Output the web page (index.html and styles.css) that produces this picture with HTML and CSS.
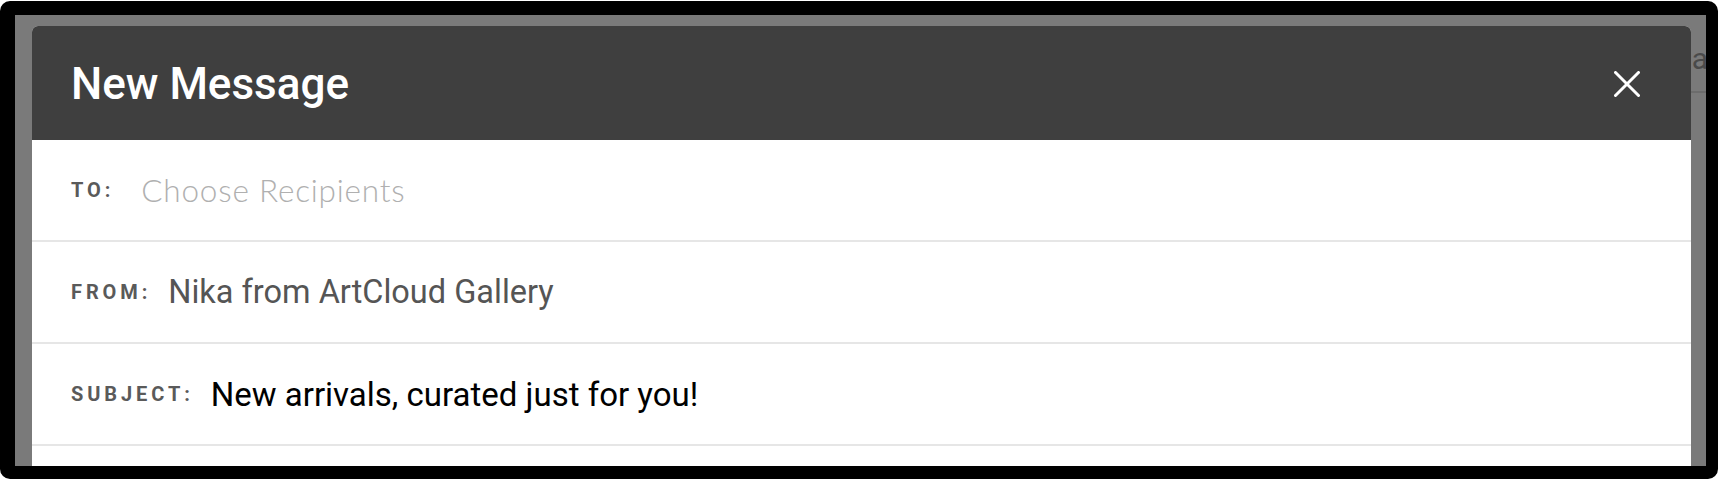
FILE: index.html
```html
<!DOCTYPE html>
<html>
<head>
  <meta charset="utf-8">
  <meta name="viewport" content="width=device-width, initial-scale=1">
  <title>New Message</title>
  <link rel="stylesheet" href="styles.css">
</head>
<body>
  <div class="frame">
    <div class="backdrop">
      <div class="page-hint"><span class="hint-text">a</span></div>
      <div class="modal">
        <div class="modal-head">
          <h2>New Message</h2>
          <button class="close" type="button" aria-label="Close">
            <svg width="26" height="26" viewBox="0 0 26 26">
              <path d="M1.5 1.5 L24.5 24.5 M24.5 1.5 L1.5 24.5" stroke="#fff" stroke-width="3" stroke-linecap="round"/>
            </svg>
          </button>
        </div>
        <div class="field">
          <label>TO:</label>
          <input type="text" class="recipients" placeholder="Choose Recipients">
        </div>
        <div class="field">
          <label>FROM:</label>
          <span class="value from">Nika from ArtCloud Gallery</span>
        </div>
        <div class="field">
          <label>SUBJECT:</label>
          <span class="value subject">New arrivals, curated just for you!</span>
        </div>
        <div class="field"></div>
      </div>
    </div>
  </div>
</body>
</html>
```

FILE: styles.css
```css
*{
  margin: 0;
  padding: 0;
  box-sizing: border-box;
  font-family: Roboto, "Liberation Sans", sans-serif;
}
body
{
  background: #fff;
  overflow: hidden;
}
.frame
{
  width: 1718px;
  height: 478px;
  margin-top: 1px;
  border-style: solid;
  border-color: #000;
  border-width: 14px 12px 13px 15px;
  border-radius: 10px;
  overflow: hidden;
}
.backdrop
{
  position: relative;
  height: 100%;
  background: #7a7a7a;
  padding: 11px 15px 0 17px;
  overflow: hidden;
}
.page-hint
{
  position: absolute;
  top: 0;
  right: 0;
  width: 40px;
  height: 78px;
  border-bottom: 2px solid #6c6c6c;
}
.hint-text
{
  position: absolute;
  right: -2px;
  top: 26px;
  font-size: 30px;
  color: #4a4a4a;
}
.modal
{
  position: relative;
  height: 100%;
  background: #fff;
  border-radius: 6px 6px 0 0;
  overflow: hidden;
}
.modal-head
{
  height: 114px;
  background: #3f3f3f;
  display: flex;
  align-items: center;
  justify-content: space-between;
  padding: 2px 51px 0 39px;
}
.modal-head h2
{
  color: #fff;
  font-size: 44px;
  font-weight: 500;
}
.close
{
  border: none;
  background: transparent;
  width: 26px;
  height: 26px;
  display: flex;
  cursor: pointer;
}
.field
{
  height: 102px;
  border-bottom: 2px solid #e6e6e6;
  display: flex;
  align-items: center;
  padding-left: 39px;
  gap: 17px;
}
.field label
{
  font-size: 20px;
  font-weight: 700;
  letter-spacing: 3.9px;
  color: #5a5a5a;
}
.recipients
{
  flex: 1;
  border: none;
  outline: none;
  background: transparent;
  padding-left: 10px;
  font-family: Lato, sans-serif;
  font-weight: 300;
  font-size: 31.5px;
  letter-spacing: 0.8px;
  color: #333;
}
.recipients::placeholder
{
  color: #b0b0b0;
}
.value
{
  font-size: 32.5px;
}
.from
{
  color: #555;
}
.subject
{
  color: #000;
  font-size: 33px;
}
```
